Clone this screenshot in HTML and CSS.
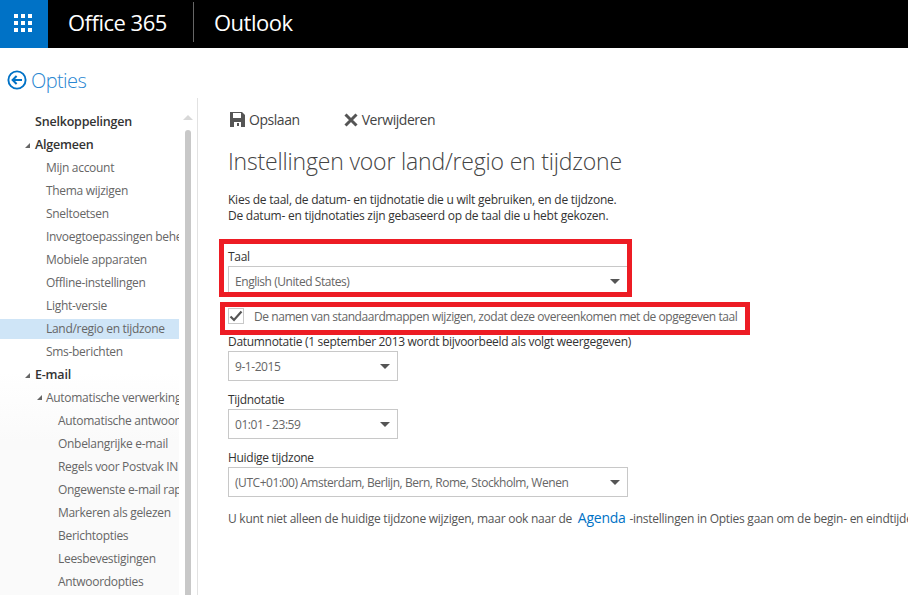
FILE: index.html
```html
<!DOCTYPE html>
<html lang="nl">
<head>
<meta charset="utf-8">
<title>Opties</title>
<link rel="stylesheet" href="styles.css">
</head>
<body>
<header class="topbar">
  <div class="waffle">
    <svg width="18" height="18" viewBox="0 0 18 18" fill="#fff"><rect x="0" y="0" width="4" height="4"/><rect x="7" y="0" width="4" height="4"/><rect x="14" y="0" width="4" height="4"/><rect x="0" y="7" width="4" height="4"/><rect x="7" y="7" width="4" height="4"/><rect x="14" y="7" width="4" height="4"/><rect x="0" y="14" width="4" height="4"/><rect x="7" y="14" width="4" height="4"/><rect x="14" y="14" width="4" height="4"/></svg>
  </div>
  <div class="brand">Office 365</div>
  <div class="sep"></div>
  <div class="app-name">Outlook</div>
</header>
<div class="title-row">
  <svg class="back" width="20" height="20" viewBox="0 0 20 20" fill="none" stroke="#0072c6"><circle cx="10" cy="10" r="8.6" stroke-width="1.9"/><path d="M15 10H6M9.6 6 5.6 10l4 4" stroke-width="2"/></svg>
  <span class="title">Opties</span>
</div>
<div class="columns">
  <nav class="nav">
    <ul class="tree">
      <li class="row l1 strong">Snelkoppelingen</li>
      <li class="row l1 strong open">Algemeen</li>
      <li class="row l2">Mijn account</li>
      <li class="row l2">Thema wijzigen</li>
      <li class="row l2">Sneltoetsen</li>
      <li class="row l2">Invoegtoepassingen beheren</li>
      <li class="row l2">Mobiele apparaten</li>
      <li class="row l2">Offline-instellingen</li>
      <li class="row l2">Light-versie</li>
      <li class="row l2 selected">Land/regio en tijdzone</li>
      <li class="row l2">Sms-berichten</li>
      <li class="row l1 strong open">E-mail</li>
      <li class="row l2 open">Automatische verwerking</li>
      <li class="row l3">Automatische antwoorden</li>
      <li class="row l3">Onbelangrijke e-mail</li>
      <li class="row l3">Regels voor Postvak IN</li>
      <li class="row l3">Ongewenste e-mail rapporteren</li>
      <li class="row l3">Markeren als gelezen</li>
      <li class="row l3">Berichtopties</li>
      <li class="row l3">Leesbevestigingen</li>
      <li class="row l3">Antwoordopties</li>
    </ul>
    <div class="scroll">
      <div class="scroll-up"></div>
      <div class="scroll-thumb"></div>
    </div>
  </nav>
  <main class="main">
    <div class="toolbar">
      <span class="tool">
        <svg width="15" height="15" viewBox="0 0 15 15" fill="#555"><path d="M0 0h12l3 3v12H0z"/><rect x="3" y="1" width="8" height="5" fill="#fff"/><rect x="4" y="10" width="7" height="5" fill="#fff"/><rect x="7" y="11" width="2" height="3" fill="#555"/></svg>
        Opslaan
      </span>
      <span class="tool">
        <svg width="14" height="14" viewBox="0 0 14 14" stroke="#555" stroke-width="3" fill="none"><path d="M1.5 1.5l11 11M12.5 1.5l-11 11"/></svg>
        Verwijderen
      </span>
    </div>
    <h1 class="heading">Instellingen voor land/regio en tijdzone</h1>
    <p class="intro">Kies de taal, de datum- en tijdnotatie die u wilt gebruiken, en de tijdzone.<br>De datum- en tijdnotaties zijn gebaseerd op de taal die u hebt gekozen.</p>
    <div class="field first">
      <label class="label">Taal</label>
      <div class="select wide"><span>English (United States)</span><i class="caret"></i></div>
    </div>
    <div class="check-row">
      <span class="check"><svg width="14" height="14" viewBox="0 0 14 14" fill="none" stroke="#555" stroke-width="2.2"><path d="M1.5 7.5l3.5 3.5 7.5-8.5"/></svg></span>
      <span>De namen van standaardmappen wijzigen, zodat deze overeenkomen met de opgegeven taal</span>
    </div>
    <div class="field tight">
      <label class="label">Datumnotatie (1 september 2013 wordt bijvoorbeeld als volgt weergegeven)</label>
      <div class="select narrow"><span>9-1-2015</span><i class="caret"></i></div>
    </div>
    <div class="field">
      <label class="label">Tijdnotatie</label>
      <div class="select narrow"><span>01:01 - 23:59</span><i class="caret"></i></div>
    </div>
    <div class="field">
      <label class="label">Huidige tijdzone</label>
      <div class="select wide"><span>(UTC+01:00) Amsterdam, Berlijn, Bern, Rome, Stockholm, Wenen</span><i class="caret"></i></div>
    </div>
    <p class="note">U kunt niet alleen de huidige tijdzone wijzigen, maar ook naar de <a class="link">Agenda</a> -instellingen in Opties gaan om de begin- en eindtijden van uw werkdag in te stellen.</p>
    <div class="mark mark-a"></div>
    <div class="mark mark-b"></div>
  </main>
</div>
</body>
</html>
```
FILE: styles.css
```css
* { box-sizing: border-box; }
html, body { margin: 0; height: 595px; overflow: hidden; }
body { background: #fff; font-family: "Open Sans", "Noto Sans", sans-serif; font-size: 12px; color: #333; letter-spacing: -0.3px; display: flex; flex-direction: column; }

.topbar { height: 48px; background: #000; color: #fff; display: flex; align-items: center; padding-bottom: 4px; flex: none; }
.waffle { width: 48px; height: 48px; margin-bottom: -4px; padding: 0 3px 3px 0; background: #0072c6; display: flex; align-items: center; justify-content: center; }
.brand { margin-left: 20px; font-size: 22px; width: 125px; letter-spacing: -0.5px; }
.sep { width: 1px; height: 40px; background: #666; align-self: flex-start; margin-top: 2px; }
.app-name { margin-left: 20px; font-size: 22px; letter-spacing: -0.5px; }

.title-row { height: 50px; display: flex; align-items: center; padding: 14px 0 0 7px; flex: none; }
.title { margin-left: 4px; font-size: 20px; color: #2a86d1; font-weight: 300; letter-spacing: -0.6px; }

.columns { flex: 1; display: flex; min-height: 0; }
.nav { width: 198px; flex: none; display: flex; overflow: hidden; border-right: 1px solid #e2e2e2; padding-top: 14px; }
.tree { list-style: none; margin: 0; padding: 0; width: 179px; flex: none; overflow: hidden; background: linear-gradient(#fff 260px, #fafafa 330px); }
.row { height: 20px; margin-bottom: 3px; line-height: 19px; white-space: nowrap; color: #666; position: relative; overflow: hidden; }
.l1 { padding-left: 35px; }
.l2 { padding-left: 46px; }
.l3 { padding-left: 58px; }
.strong { color: #333; font-size: 12.5px; font-weight: 600; letter-spacing: -0.2px; line-height: 20px; }
.selected { background: #cfe5f7; line-height: 20px; }
.open::before { content: ""; position: absolute; top: 8px; border-style: solid; border-width: 0 0 5px 5px; border-color: transparent transparent #666 transparent; }
.l1.open::before { left: 25px; }
.l2.open::before { left: 37px; top: 7px; }

.scroll { width: 6px; margin-left: 6px; flex: none; }
.scroll-up { width: 0; height: 0; margin: 3px 0 0 -2px; border: 5px solid transparent; border-top: 0; border-bottom-color: #d8d8d8; }
.scroll-thumb { width: 6px; height: 600px; margin-top: 10px; background: #c8c8c8; border-radius: 3px 3px 0 0; }

.main { flex: 1; min-width: 0; padding: 12px 0 0 30px; position: relative; overflow: hidden; }
.toolbar { display: flex; height: 19px; align-items: center; font-size: 14px; color: #444; letter-spacing: -0.45px; }
.tool { display: flex; align-items: center; gap: 4px; margin-right: 44px; }
.tool:first-child svg { margin-left: 2px; }
.heading { margin: 17px 0 0; font-size: 23px; line-height: 30px; font-weight: 300; color: #444; letter-spacing: -0.18px; white-space: nowrap; }
.intro { margin: 16px 0 0; line-height: 16px; color: #333; letter-spacing: -0.24px; }

.field { margin-top: 10px; }
.field.first { margin-top: 24px; }
.field.tight { margin-top: 4px; }
.label { display: block; height: 18px; line-height: 18px; color: #333; }
.select { height: 30px; border: 1px solid #c8c8c8; display: flex; align-items: center; justify-content: space-between; padding: 0 7px 0 6px; color: #666; background: #fff; letter-spacing: -0.45px; }
.wide { width: 400px; }
.narrow { width: 170px; }
.caret { width: 0; height: 0; border-style: solid; border-width: 5px 5.5px 0; border-color: #555 transparent transparent; }

.check-row { display: flex; align-items: center; height: 26px; margin-top: 7px; color: #666; gap: 10px; letter-spacing: -0.44px; }
.check { width: 16px; height: 16px; border: 1px solid #c8c8c8; display: flex; align-items: center; justify-content: center; flex: none; }

.note { margin: 10px 0 0; color: #555; white-space: nowrap; line-height: 22px; letter-spacing: -0.26px; }
.link { color: #0072c6; font-size: 14px; margin: 0 1px 0 3px; }

.mark { position: absolute; border: 5px solid #ed1c24; pointer-events: none; }
.mark-a { left: 21px; top: 141px; width: 413px; height: 58px; }
.mark-b { left: 22px; top: 204px; width: 530px; height: 33px; }
```
